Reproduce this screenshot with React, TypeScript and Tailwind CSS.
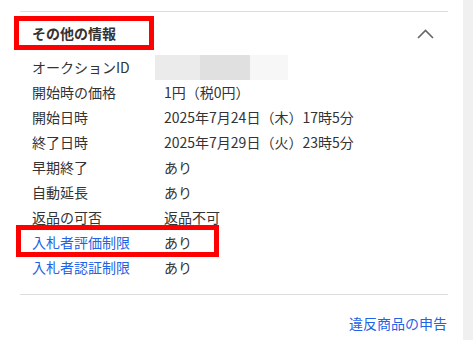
const rows: { label: string; value: string; link?: boolean }[] = [
  { label: "開始時の価格", value: "1円（税0円）" },
  { label: "開始日時", value: "2025年7月24日（木）17時5分" },
  { label: "終了日時", value: "2025年7月29日（火）23時5分" },
  { label: "早期終了", value: "あり" },
  { label: "自動延長", value: "あり" },
  { label: "返品の可否", value: "返品不可" },
  { label: "入札者評価制限", value: "あり", link: true },
  { label: "入札者認証制限", value: "あり", link: true },
];

function ChevronUp() {
  return (
    <svg width="17" height="10" viewBox="0 0 17 10" fill="none">
      <polyline
        points="1,9 8.5,1.5 16,9"
        stroke="#666"
        strokeWidth="1.6"
        strokeLinejoin="miter"
      />
    </svg>
  );
}

export default function App() {
  return (
    <div
      className="relative flex h-[340px] w-[473px] bg-white text-[14px] text-[#333]"
      style={{ fontFamily: '"Noto Sans CJK JP", "Noto Sans", sans-serif' }}
    >
      <div className="w-[463px] pl-[20px] pr-[15px] pt-[11px]">
        <div className="border-t border-[#dddddd]">
          {/* heading */}
          <div className="flex h-[43px] items-center justify-between pl-[12px] pr-[14px]">
            <span className="text-[14px] font-bold">その他の情報</span>
            <span className="mt-[1px]">
              <ChevronUp />
            </span>
          </div>

          {/* auction id row */}
          <div className="flex h-[25px] items-center">
            <span className="w-[135px] pl-[12px] leading-[25px]">オークションID</span>
            <div className="flex h-[25px]">
              <div className="w-[45px] bg-[#ebebeb]" />
              <div className="w-[50px] bg-[#e0e0e0]" />
              <div className="w-[38px] bg-[#f7f7f7]" />
            </div>
          </div>

          {rows.map((r) => (
            <div key={r.label} className="flex h-[25px] items-center leading-[25px]">
              <span
                className={
                  r.link
                    ? "w-[144px] pl-[12px] text-[#1f63e6]"
                    : "w-[144px] pl-[12px]"
                }
              >
                {r.label}
              </span>
              <span>{r.value}</span>
            </div>
          ))}

          <div className="mt-[14px] border-t border-[#dddddd]">
            <div className="mt-[16px] flex h-[25px] justify-end pr-[1px] leading-[25px] text-[#1f63e6]">
              違反商品の申告
            </div>
          </div>
        </div>
      </div>
      <div className="flex-1 bg-[#f0f0f0]" />

      {/* annotation boxes */}
      <div className="absolute left-[14px] top-[16px] h-[34px] w-[140px] border-[5px] border-[#ff0000]" />
      <div className="absolute left-[16px] top-[225px] h-[32px] w-[203px] border-[5px] border-[#ff0000]" />
    </div>
  );
}
